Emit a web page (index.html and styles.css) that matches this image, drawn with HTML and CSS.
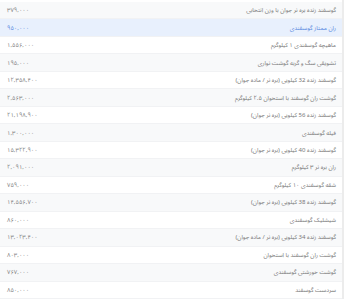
FILE: index.html
```html
<!DOCTYPE html>
<html lang="fa" dir="rtl">
<head>
<meta charset="utf-8">
<link rel="stylesheet" href="styles.css">
</head>
<body>
<div class="list">
  <div class="row striped"><span class="name">گوسفند زنده بره نر جوان با وزن انتخابی</span><span class="price">۳۷۹,۰۰۰</span></div>
  <div class="row active"><span class="name">ران ممتاز گوسفندی</span><span class="price">۹۵۰,۰۰۰</span></div>
  <div class="row"><span class="name">ماهیچه گوسفندی ۱ کیلوگرم</span><span class="price">۱,۵۵۶,۰۰۰</span></div>
  <div class="row striped"><span class="name">تشویقی سگ و گربه گوشت نواری</span><span class="price">۱۹۵,۰۰۰</span></div>
  <div class="row"><span class="name">گوسفند زنده 32 کیلویی (بره نر / ماده جوان)</span><span class="price">۱۲,۳۵۸,۴۰۰</span></div>
  <div class="row striped"><span class="name">گوشت ران گوسفند با استخوان ۲.۵ کیلوگرم</span><span class="price">۲,۵۶۳,۰۰۰</span></div>
  <div class="row"><span class="name">گوسفند زنده 56 کیلویی (بره نر جوان)</span><span class="price">۲۱,۱۹۸,۹۰۰</span></div>
  <div class="row striped"><span class="name">فیله گوسفندی</span><span class="price">۱,۳۰۰,۰۰۰</span></div>
  <div class="row"><span class="name">گوسفند زنده 40 کیلویی (بره نر جوان)</span><span class="price">۱۵,۳۲۲,۹۰۰</span></div>
  <div class="row striped"><span class="name">ران بره نر ۳ کیلوگرم</span><span class="price">۲,۰۹۱,۰۰۰</span></div>
  <div class="row"><span class="name">شقه گوسفندی ۱۰ کیلوگرم</span><span class="price">۷۵۹,۰۰۰</span></div>
  <div class="row striped"><span class="name">گوسفند زنده 38 کیلویی (بره نر جوان)</span><span class="price">۱۴,۵۵۶,۷۰۰</span></div>
  <div class="row"><span class="name">شیشلیک گوسفندی</span><span class="price">۸۶۰,۰۰۰</span></div>
  <div class="row striped"><span class="name">گوسفند زنده 34 کیلویی (بره نر / ماده جوان)</span><span class="price">۱۳,۰۲۳,۴۰۰</span></div>
  <div class="row"><span class="name">گوشت ران گوسفند با استخوان</span><span class="price">۸۰۳,۰۰۰</span></div>
  <div class="row striped"><span class="name">گوشت خورشتی گوسفندی</span><span class="price">۷۶۷,۰۰۰</span></div>
  <div class="row"><span class="name">سردست گوسفند</span><span class="price">۸۵۰,۰۰۰</span></div>
</div>
</body>
</html>
```

FILE: styles.css
```css
html, body {
  margin: 0;
  padding: 0;
  background: #ffffff;
}
body {
  font-family: "Noto Sans Arabic", "Noto Naskh Arabic", "DejaVu Sans", sans-serif;
  font-size: 6px;
  color: #777;
}
.list {
  padding-top: 2px;
  width: 344px;
  border-right: 2px solid #ececec;
  box-sizing: border-box;
}
.row {
  height: 17.47px;
  display: flex;
  align-items: center;
  justify-content: space-between;
  padding: 0 6px 0 7px;
  border-bottom: 1px solid #f1f2f4;
  box-sizing: border-box;
}
.row.striped {
  background: #f8f9fa;
}
.row.active {
  background: #e8f0fd;
  color: #5587e0;
}
.price {
  color: #808080;
}
.row.active .price {
  color: #5587e0;
}
```
